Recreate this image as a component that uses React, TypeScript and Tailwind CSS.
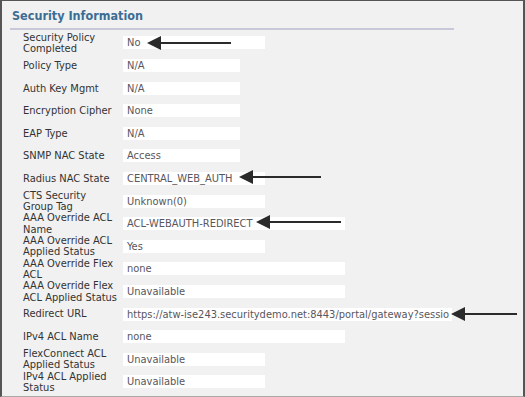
import React from 'react';

type Row = {
  label: string[];
  value: string;
  width: string;
};

const rows: Row[] = [
  { label: ['Security Policy', 'Completed'], value: 'No', width: 'w-[142px]' },
  { label: ['Policy Type'], value: 'N/A', width: 'w-[117px]' },
  { label: ['Auth Key Mgmt'], value: 'N/A', width: 'w-[117px]' },
  { label: ['Encryption Cipher'], value: 'None', width: 'w-[117px]' },
  { label: ['EAP Type'], value: 'N/A', width: 'w-[117px]' },
  { label: ['SNMP NAC State'], value: 'Access', width: 'w-[117px]' },
  { label: ['Radius NAC State'], value: 'CENTRAL_WEB_AUTH', width: 'w-[142px]' },
  { label: ['CTS Security', 'Group Tag'], value: 'Unknown(0)', width: 'w-[142px]' },
  { label: ['AAA Override ACL', 'Name'], value: 'ACL-WEBAUTH-REDIRECT', width: 'w-[222px]' },
  { label: ['AAA Override ACL', 'Applied Status'], value: 'Yes', width: 'w-[142px]' },
  { label: ['AAA Override Flex', 'ACL'], value: 'none', width: 'w-[222px]' },
  { label: ['AAA Override Flex', 'ACL Applied Status'], value: 'Unavailable', width: 'w-[222px]' },
  {
    label: ['Redirect URL'],
    value: 'https://atw-ise243.securitydemo.net:8443/portal/gateway?sessio',
    width: 'w-[329px]',
  },
  { label: ['IPv4 ACL Name'], value: 'none', width: 'w-[222px]' },
  { label: ['FlexConnect ACL', 'Applied Status'], value: 'Unavailable', width: 'w-[142px]' },
  { label: ['IPv4 ACL Applied', 'Status'], value: 'Unavailable', width: 'w-[142px]' },
];

// left-pointing annotation arrow
const Arrow = ({ x, y, len }: { x: number; y: number; len: number }) => (
  <svg
    className="absolute"
    style={{ left: x, top: y - 8 }}
    width={len}
    height={16}
    viewBox={`0 0 ${len} 16`}
  >
    <polygon points="0,8 14,1 14,15" fill="#2b2b2b" />
    <line x1={12} y1={8} x2={len} y2={8} stroke="#2b2b2b" strokeWidth={2} />
  </svg>
);

const App = () => {
  return (
    <div className="relative w-[525px] h-[397px] bg-[#f1f1f1] border-l-2 border-r-2 border-t border-b border-l-[#555] border-r-[#555] border-t-[#555] border-b-[#a8a8a8] overflow-hidden font-['DejaVu_Sans_Condensed','DejaVu_Sans',sans-serif]">
      <div className="pl-[8px] w-[452px]">
        <div className="h-[27px] pl-[2px] pt-[7px] text-[12.5px] leading-[16px] font-bold text-[#3b6d94]">
          Security Information
        </div>
        <div className="h-[2px] bg-[#c7c9d9]" />
      </div>

      <div className="pl-[21px] pt-[1.7px]">
        {rows.map((row, i) => (
          <div key={i} className="flex items-center h-[22.6px]">
            <div className="w-[100px] shrink-0 text-[11px] leading-[11.3px] text-[#333]">
              {row.label.map((line, j) => (
                <div key={j} className="whitespace-nowrap">
                  {line}
                </div>
              ))}
            </div>
            <div
              className={`${row.width} h-[13px] bg-white pl-[4px] text-[11px] leading-[13px] text-[#59565c] whitespace-nowrap overflow-hidden`}
            >
              {row.value}
            </div>
          </div>
        ))}
      </div>

      <Arrow x={145} y={42} len={84} />
      <Arrow x={237} y={176} len={82} />
      <Arrow x={254} y={221} len={85} />
      <Arrow x={449} y={313} len={66} />
    </div>
  );
};

export default App;
